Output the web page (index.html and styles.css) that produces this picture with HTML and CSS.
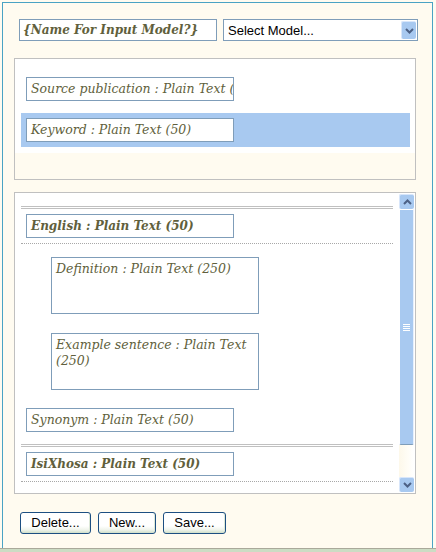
FILE: index.html
```html
<!DOCTYPE html>
<html>
<head>
<meta charset="utf-8">
<link rel="stylesheet" href="styles.css">
</head>
<body>
<div class="frame">
  <div class="toprow">
    <div class="field name">{Name For Input Model?}</div>
    <div class="select">
      <span class="select-text">Select Model...</span>
      <span class="drop-btn">
        <svg width="9" height="6" viewBox="0 0 9 6"><path d="M1 1 L4.5 4.5 L8 1" fill="none" stroke="#4d6185" stroke-width="2"/></svg>
      </span>
    </div>
  </div>

  <div class="panel panel-top">
    <div class="list">
      <div class="row"><div class="field">Source publication : Plain Text (50)</div></div>
      <div class="row selected"><div class="field">Keyword : Plain Text (50)</div></div>
    </div>
  </div>

  <div class="panel panel-tree">
    <div class="tree">
      <div class="group">
        <div class="group-head"><div class="field bold">English : Plain Text (50)</div></div>
        <div class="children">
          <div class="area def">Definition : Plain Text (250)</div>
          <div class="area ex">Example sentence : Plain Text (250)</div>
        </div>
        <div class="sibling"><div class="field">Synonym : Plain Text (50)</div></div>
      </div>
      <div class="group">
        <div class="group-head"><div class="field bold">IsiXhosa : Plain Text (50)</div></div>
      </div>
    </div>
    <div class="scrollbar">
      <div class="sb-btn">
        <svg width="9" height="6" viewBox="0 0 9 6"><path d="M1 5 L4.5 1.5 L8 5" fill="none" stroke="#4d6185" stroke-width="2"/></svg>
      </div>
      <div class="sb-thumb"><span class="grip"></span></div>
      <div class="sb-track"></div>
      <div class="sb-btn">
        <svg width="9" height="6" viewBox="0 0 9 6"><path d="M1 1 L4.5 4.5 L8 1" fill="none" stroke="#4d6185" stroke-width="2"/></svg>
      </div>
    </div>
  </div>

  <div class="buttons">
    <button class="btn w-del">Delete...</button>
    <button class="btn w-new">New...</button>
    <button class="btn w-save">Save...</button>
  </div>
</div>
<div class="status"></div>
</body>
</html>
```
FILE: styles.css
```css
html, body {
  margin: 0;
  padding: 0;
  background: #fffbf0;
}
body {
  width: 436px;
  height: 552px;
  overflow: hidden;
}
.frame {
  box-sizing: border-box;
  margin: 2px 0 0 2px;
  width: 431px;
  height: 546px;
  border: 1px solid #4aa3c4;
  border-bottom: none;
  background: #fffbf0;
  padding: 16px 0 0 11px;
}
.status {
  height: 3px;
  border-top: 1px solid #aaa99a;
  background: #ccdcc4;
}
.toprow {
  display: flex;
  gap: 6px;
  margin-left: 5px;
  height: 22px;
}
.field {
  box-sizing: border-box;
  width: 208px;
  height: 24px;
  border: 1px solid #7f9db9;
  background: #fff;
  padding: 0 4px;
  font-family: "DejaVu Serif", serif;
  font-style: italic;
  font-size: 12.5px;
  line-height: 22px;
  color: #615f3c;
  white-space: nowrap;
  overflow: hidden;
}
.field.bold {
  font-weight: bold;
  font-size: 12px;
}
.field.name {
  width: 198px;
  height: 22px;
  line-height: 20px;
  font-weight: bold;
  font-size: 12px;
  padding-left: 3px;
}
.select {
  box-sizing: border-box;
  width: 195px;
  height: 22px;
  border: 1px solid #7f9db9;
  background: #fff;
  display: flex;
  align-items: center;
  justify-content: space-between;
  font-family: "Liberation Sans", sans-serif;
  font-size: 13px;
  color: #000;
  padding-left: 4px;
}
.drop-btn {
  box-sizing: border-box;
  width: 15px;
  height: 18px;
  margin-right: 1px;
  background: #a8c9f0;
  border-radius: 2px;
  border-top: 1px solid #d8e6fa;
  border-left: 1px solid #d8e6fa;
  display: flex;
  align-items: center;
  justify-content: center;
}
.panel {
  box-sizing: border-box;
  width: 402px;
  border: 1px solid #c0c0c0;
}
.panel-top {
  margin-top: 17px;
  height: 122px;
  background: #fffbf0;
}
.list {
  background: #fff;
  padding: 13px 5px 6px 6px;
  display: flex;
  flex-direction: column;
  gap: 7px;
}
.row {
  padding: 5px;
}
.row.selected {
  background: #a8c9f0;
}
.panel-tree {
  margin-top: 12px;
  height: 302px;
  background: #fff;
  display: flex;
}
.tree {
  flex: 1;
  overflow: hidden;
  padding: 13px 5px 0 6px;
}
.group {
  border-top: 3px double #c0c0c0;
}
.group-head {
  padding: 5px;
  border-bottom: 1px dotted #a8a8a8;
}
.children {
  padding: 13px 0 0 30px;
}
.area {
  box-sizing: border-box;
  width: 208px;
  height: 57px;
  border: 1px solid #7f9db9;
  background: #fff;
  padding: 3px 4px;
  font-family: "DejaVu Serif", serif;
  font-style: italic;
  font-size: 12.5px;
  line-height: 16px;
  color: #615f3c;
}
.area.def {
  margin-bottom: 19px;
}
.area.ex {
  margin-bottom: 18px;
}
.sibling {
  padding-left: 5px;
  margin-bottom: 12px;
}
.scrollbar {
  width: 17px;
  box-sizing: border-box;
  padding: 1px 1px 1px 1px;
  display: flex;
  flex-direction: column;
  background: #fff;
}
.sb-btn {
  box-sizing: border-box;
  height: 15px;
  background: #a8c9f0;
  border-radius: 2px;
  border-top: 1px solid #d8e6fa;
  border-left: 1px solid #d8e6fa;
  display: flex;
  align-items: center;
  justify-content: center;
}
.sb-thumb {
  box-sizing: border-box;
  height: 236px;
  background: #a8c9f0;
  border: 1px solid #fff;
  border-right-color: #e8f0fc;
  border-bottom: 1px solid #7f9db9;
  border-radius: 0 0 2px 2px;
  display: flex;
  align-items: center;
  justify-content: center;
}
.grip {
  display: block;
  width: 7px;
  height: 7px;
  background: repeating-linear-gradient(#fff 0 1px, transparent 1px 2px);
}
.sb-track {
  height: 32px;
  background: linear-gradient(to right, #fdf8ea, #fffdf6 60%, #fff);
}
.buttons {
  margin: 18px 0 0 6px;
  display: flex;
  gap: 7px;
}
.btn {
  box-sizing: border-box;
  height: 22px;
  border: 1px solid #1d4f82;
  border-radius: 3px;
  background: linear-gradient(#ffffff 0%, #ffffff 65%, #eef3ea 85%, #cfdfc9 100%);
  box-shadow: inset -1px 0 0 #dde8d8;
  font-family: "Liberation Sans", sans-serif;
  font-size: 13px;
  color: #000;
  padding: 0;
  line-height: 20px;
}
.w-del { width: 71px; }
.w-new { width: 58px; }
.w-save { width: 63px; }
```
